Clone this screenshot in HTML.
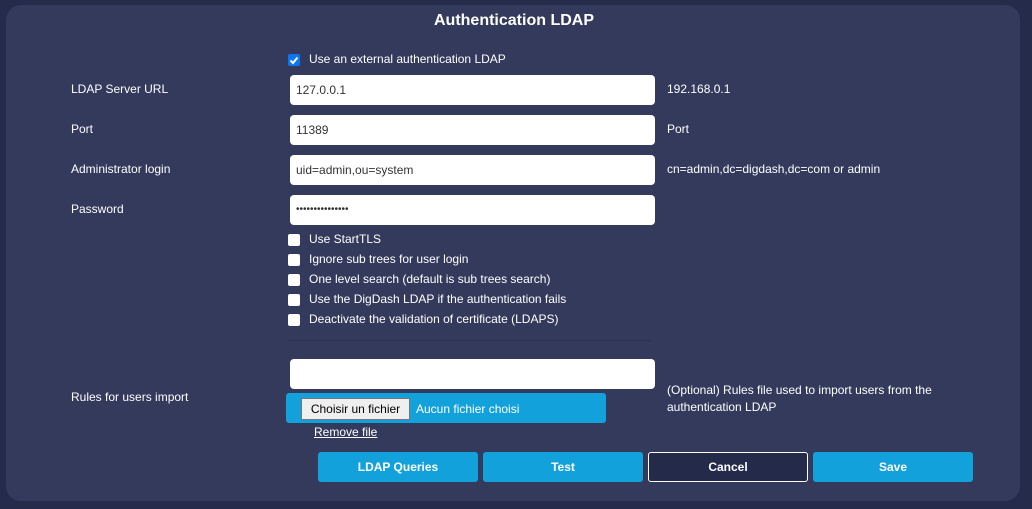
<!DOCTYPE html>
<html><head><style>
body{margin:0;width:1032px;height:509px;background:#252b4a;font-family:"Liberation Sans",sans-serif;font-size:12px;color:#fff;position:relative;overflow:hidden}
.p{position:absolute;left:6px;top:5px;width:1014px;height:496px;background:#333a5c;border-radius:15px}
.a{position:absolute;white-space:nowrap}
.in{position:absolute;left:290px;width:365px;height:30px;background:#fff;border-radius:4px;color:#333;box-sizing:border-box;padding:8px 6px;font-size:12px}
.cb{position:absolute;left:288px;width:12px;height:12px;background:#fff;border-radius:2px}
.b{position:absolute;top:452px;width:160px;height:30px;background:#12a1db;border-radius:3px;text-align:center;line-height:30px;font-weight:bold;font-size:12px}
</style></head><body>
<div class="p"></div>
<div class="a" style="left:0;width:1028px;text-align:center;top:12px;font-size:16px;font-weight:bold">Authentication LDAP</div>
<div class="cb" style="top:54px;background:#0b76f0"><svg width="12" height="12" style="position:absolute;left:0;top:0"><path d="M2.5 6.5l2.5 2.5 4.5-5.5" stroke="#fff" stroke-width="2" fill="none"/></svg></div>
<div class="a" style="left:309px;top:52px">Use an external authentication LDAP</div>
<div class="a" style="left:71px;top:82px">LDAP Server URL</div>
<div class="in" style="top:75px">127.0.0.1</div>
<div class="a" style="left:667px;top:82px">192.168.0.1</div>
<div class="a" style="left:71px;top:122px">Port</div>
<div class="in" style="top:115px">11389</div>
<div class="a" style="left:667px;top:122px">Port</div>
<div class="a" style="left:71px;top:162px">Administrator login</div>
<div class="in" style="top:155px">uid=admin,ou=system</div>
<div class="a" style="left:667px;top:162px">cn=admin,dc=digdash,dc=com or admin</div>
<div class="a" style="left:71px;top:202px">Password</div>
<div class="in" style="top:195px;font-size:10px;padding-top:9px">•••••••••••••••</div>
<div class="cb" style="top:234px"></div><div class="a" style="left:309px;top:232px">Use StartTLS</div>
<div class="cb" style="top:254px"></div><div class="a" style="left:309px;top:252px">Ignore sub trees for user login</div>
<div class="cb" style="top:274px"></div><div class="a" style="left:309px;top:272px">One level search (default is sub trees search)</div>
<div class="cb" style="top:294px"></div><div class="a" style="left:309px;top:292px">Use the DigDash LDAP if the authentication fails</div>
<div class="cb" style="top:314px"></div><div class="a" style="left:309px;top:312px">Deactivate the validation of certificate (LDAPS)</div>
<div class="a" style="left:288px;top:340px;width:363px;height:1px;background:#2a3050"></div>
<div class="a" style="left:71px;top:390px">Rules for users import</div>
<div class="in" style="top:359px"></div>
<div class="a" style="left:286px;top:393px;width:320px;height:30px;background:#12a1db;border-radius:3px"></div>
<div class="a" style="left:301px;top:398px;width:109px;height:22px;background:#efefef;border:1px solid #767676;box-sizing:border-box;color:#000;text-align:center;line-height:20px">Choisir un fichier</div>
<div class="a" style="left:416px;top:402px">Aucun fichier choisi</div>
<div class="a" style="left:314px;top:425px;text-decoration:underline">Remove file</div>
<div class="a" style="left:667px;top:382px;line-height:17px">(Optional) Rules file used to import users from the<br>authentication LDAP</div>
<div class="b" style="left:318px">LDAP Queries</div>
<div class="b" style="left:483px">Test</div>
<div class="b" style="left:648px;background:#232a4a;border:1px solid #fff;box-sizing:border-box;line-height:28px">Cancel</div>
<div class="b" style="left:813px">Save</div>
</body></html>
